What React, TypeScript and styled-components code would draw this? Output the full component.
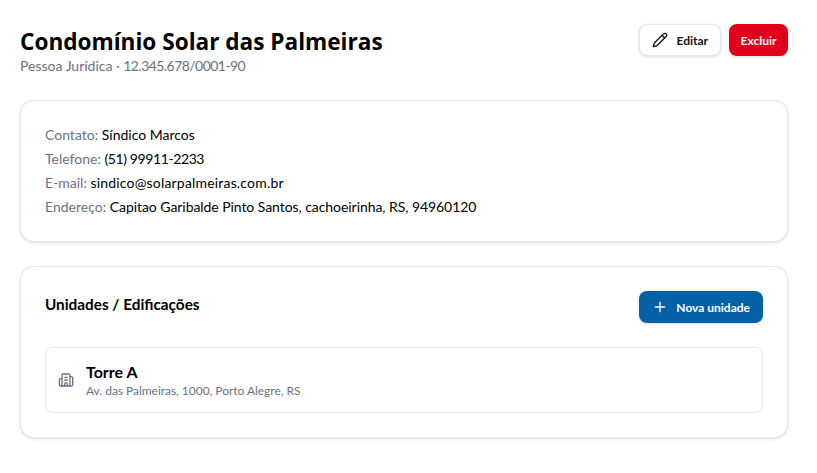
import { Building2, Pencil, Plus } from 'lucide-react'
import styled, { createGlobalStyle } from 'styled-components'

const GlobalStyle = createGlobalStyle`
  * {
    box-sizing: border-box;
  }

  body {
    margin: 0;
    background: #fff;
    color: #000;
    font-family: Lato, 'Open Sans', 'Liberation Sans', sans-serif;
  }
`

const Page = styled.div`
  display: flex;
  flex-direction: column;
  gap: 24px;
  padding: 24px 29px 24px 20px;
`

const Header = styled.header`
  display: flex;
  align-items: flex-start;
  justify-content: space-between;
  min-height: 52px;
`

const Title = styled.h1`
  margin: 0;
  font-family: 'Open Sans', sans-serif;
  font-size: 22.6px;
  line-height: 35px;
  font-weight: 700;
`

const Subtitle = styled.div`
  font-size: 14px;
  line-height: 14px;
  color: #6b7280;
`

const DocNumber = styled.span`
  letter-spacing: -0.55px;
`

const Actions = styled.div`
  display: flex;
  gap: 8px;
`

const Button = styled.button<{ $variant: 'outline' | 'danger' | 'primary' }>`
  display: flex;
  align-items: center;
  gap: 8px;
  height: 32px;
  padding: 0 ${({ $variant }) => ($variant === 'danger' ? '10.5px' : '12px')};
  border: 1px solid ${({ $variant }) => ($variant === 'outline' ? '#e5e7eb' : 'transparent')};
  border-radius: 8px;
  font: 700 12px Lato, 'Open Sans', sans-serif;
  color: ${({ $variant }) => ($variant === 'outline' ? '#111' : '#fff')};
  background: ${({ $variant }) =>
    $variant === 'outline' ? '#fff' : $variant === 'danger' ? '#e00019' : '#0561a5'};
  box-shadow: 0 1px 3px rgba(0, 0, 0, 0.15);
`

const Card = styled.section`
  display: flex;
  flex-direction: column;
  padding: 24px;
  border: 1px solid #e5e7eb;
  border-radius: 14px;
  background: #fff;
  box-shadow: 0 1px 3px rgba(0, 0, 0, 0.14);
`

const InfoList = styled.div`
  display: flex;
  flex-direction: column;
  gap: 4px;
`

const InfoRow = styled.div`
  font-size: 14px;
  line-height: 20px;
  color: #000;
`

const Label = styled.span`
  color: #6b7280;
`

const Value = styled.span<{ $spacing?: number }>`
  letter-spacing: ${({ $spacing }) => $spacing ?? 0}px;
`

const SectionHeader = styled.div`
  display: flex;
  align-items: center;
  justify-content: space-between;
  margin-bottom: 24px;
`

const SectionTitle = styled.h2`
  margin: 0 0 6px;
  font-size: 15.3px;
  font-weight: 700;
`

const Unit = styled.div`
  display: flex;
  align-items: center;
  gap: 12px;
  height: 66px;
  padding: 0 12px;
  border: 1px solid #e5e7eb;
  border-radius: 8px;
`

const UnitName = styled.div`
  font-size: 16px;
  line-height: 22px;
  font-weight: 700;
`

const UnitAddress = styled.div`
  font-size: 12px;
  line-height: 16px;
  letter-spacing: -0.03px;
  color: #6b7280;
`

export default function App() {
  return (
    <Page>
      <GlobalStyle />
      <Header>
        <div>
          <Title>Condomínio Solar das Palmeiras</Title>
          <Subtitle>
            Pessoa Jurídica · <DocNumber>12.345.678/0001-90</DocNumber>
          </Subtitle>
        </div>
        <Actions>
          <Button $variant="outline">
            <Pencil size={16} />
            Editar
          </Button>
          <Button $variant="danger">Excluir</Button>
        </Actions>
      </Header>
      <Card>
        <InfoList>
          <InfoRow>
            <Label>Contato:</Label> <Value>Síndico Marcos</Value>
          </InfoRow>
          <InfoRow>
            <Label>Telefone:</Label> <Value $spacing={-0.4}>(51) 99911-2233</Value>
          </InfoRow>
          <InfoRow>
            <Label>E-mail:</Label> <Value $spacing={0.18}>sindico@solarpalmeiras.com.br</Value>
          </InfoRow>
          <InfoRow>
            <Label>Endereço:</Label>{' '}
            <Value $spacing={-0.06}>Capitao Garibalde Pinto Santos, cachoeirinha, RS, 94960120</Value>
          </InfoRow>
        </InfoList>
      </Card>
      <Card>
        <SectionHeader>
          <SectionTitle>Unidades / Edificações</SectionTitle>
          <Button $variant="primary">
            <Plus size={16} />
            Nova unidade
          </Button>
        </SectionHeader>
        <Unit>
          <Building2 size={16} color="#6b7280" />
          <div>
            <UnitName>Torre A</UnitName>
            <UnitAddress>Av. das Palmeiras, 1000, Porto Alegre, RS</UnitAddress>
          </div>
        </Unit>
      </Card>
    </Page>
  )
}
